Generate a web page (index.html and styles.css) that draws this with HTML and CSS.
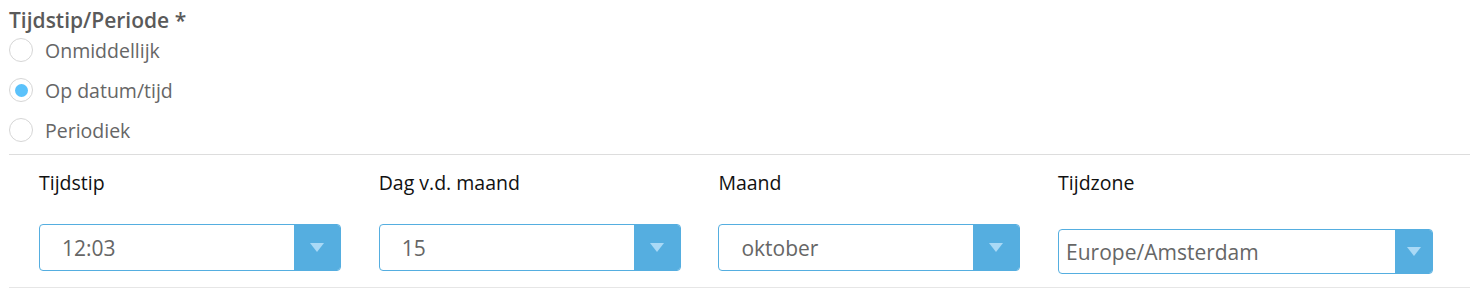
FILE: index.html
```html
<!DOCTYPE html>
<html lang="nl">
<head>
<meta charset="utf-8">
<title>Tijdstip/Periode</title>
<link rel="stylesheet" href="styles.css">
</head>
<body>
<div class="form">
  <div class="field-title">Tijdstip/Periode *</div>
  <div class="radios">
    <label class="radio"><span class="circle"></span><span class="radio-text">Onmiddellijk</span></label>
    <label class="radio"><span class="circle checked"></span><span class="radio-text">Op datum/tijd</span></label>
    <label class="radio"><span class="circle"></span><span class="radio-text">Periodiek</span></label>
  </div>
  <div class="section">
    <div class="col">
      <div class="col-label">Tijdstip</div>
      <div class="select"><span class="select-value">12:03</span><span class="select-btn"><span class="tri"></span></span></div>
    </div>
    <div class="col">
      <div class="col-label">Dag v.d. maand</div>
      <div class="select"><span class="select-value">15</span><span class="select-btn"><span class="tri"></span></span></div>
    </div>
    <div class="col">
      <div class="col-label">Maand</div>
      <div class="select"><span class="select-value">oktober</span><span class="select-btn"><span class="tri"></span></span></div>
    </div>
    <div class="col col-tz">
      <div class="col-label">Tijdzone</div>
      <div class="select select-tz"><span class="select-value">Europe/Amsterdam</span><span class="select-btn"><span class="tri"></span></span></div>
    </div>
  </div>
</div>
</body>
</html>
```

FILE: styles.css
```css
html, body {
  margin: 0;
  padding: 0;
  background: #fff;
}
body {
  font-family: "Open Sans", "DejaVu Sans", sans-serif;
  color: #666;
}
.form {
  width: 1461px;
  padding-left: 9px;
}
.field-title {
  font-size: 21px;
  font-weight: 600;
  color: #5a5a5a;
  height: 30px;
  line-height: 40px;
}
.radios {
  display: flex;
  flex-direction: column;
  padding-bottom: 4px;
}
.radio {
  display: flex;
  align-items: center;
  height: 40px;
  gap: 12px;
}
.circle {
  width: 24px;
  height: 24px;
  box-sizing: border-box;
  border: 1px solid #d6d6d6;
  border-radius: 50%;
  display: flex;
  align-items: center;
  justify-content: center;
  background: #fff;
}
.circle.checked::after {
  content: "";
  width: 13px;
  height: 13px;
  border-radius: 50%;
  background: #5bc2fb;
}
.radio-text {
  font-size: 19.5px;
  color: #666;
}
.section {
  border-top: 1px solid #ddd;
  border-bottom: 1px solid #e6e6e6;
  display: flex;
  padding-left: 30px;
  height: 134px;
  box-sizing: border-box;
}
.col {
  width: 339.7px;
  flex-shrink: 0;
  display: flex;
  flex-direction: column;
}
.col-label {
  font-size: 19.5px;
  color: #111;
  height: 69px;
  line-height: 55px;
}
.select {
  width: 302px;
  height: 47px;
  box-sizing: border-box;
  border: 1px solid #55aee0;
  border-radius: 4px;
  display: flex;
  align-items: stretch;
  overflow: hidden;
}
.select-value {
  flex: 1;
  display: flex;
  align-items: center;
  padding-left: 22px;
  font-size: 21px;
  color: #666;
}
.select-btn {
  width: 46px;
  background: #55aee0;
  display: flex;
  align-items: center;
  justify-content: center;
}
.tri {
  width: 0;
  height: 0;
  border-left: 7px solid transparent;
  border-right: 7px solid transparent;
  border-top: 9px solid #a9d9f6;
}
.col-tz {
  width: 400px;
}
.select-tz {
  width: 375px;
  height: 45px;
  margin-top: 5px;
}
.select-tz .select-value {
  padding-left: 7px;
}
.select-tz .select-btn {
  width: 37px;
}
```
